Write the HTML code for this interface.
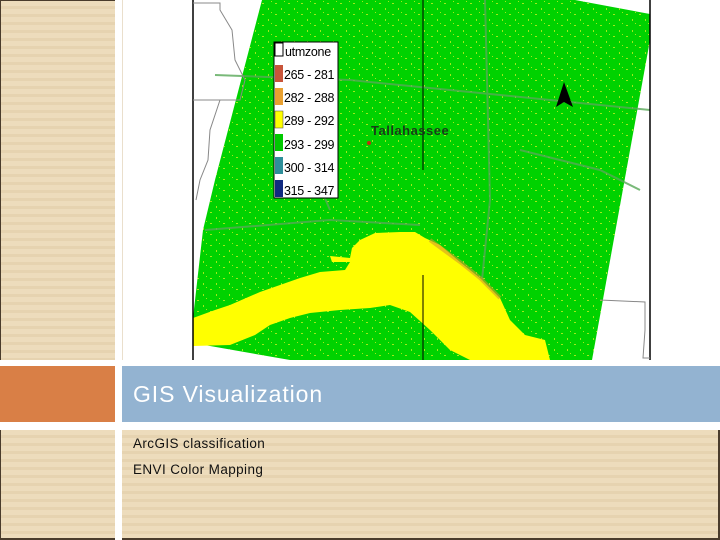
<!DOCTYPE html>
<html><head><meta charset="utf-8"><style>
body{margin:0;width:720px;height:540px;position:relative;overflow:hidden;background:#fff;font-family:"Liberation Sans",sans-serif}
.str{position:absolute;background:repeating-linear-gradient(180deg,#eddcbc 0,#eddcbc 5px,#e6d3b0 5px,#e6d3b0 8px)}
</style></head><body>
<div class="str" style="left:0;top:0;width:115px;height:360px;border-top:1px solid #4a3c2c;border-left:1px solid #4a3c2c;box-sizing:border-box"></div>
<div style="position:absolute;left:122px;top:0;width:1px;height:360px;background:#eadfcc"></div>
<div style="position:absolute;left:0;top:366px;width:115px;height:56px;background:#d97f46"></div>
<div style="position:absolute;left:122px;top:366px;width:598px;height:56px;background:#93b3d1"></div>
<div style="position:absolute;left:133px;top:381px;color:#fff;font-size:23px;letter-spacing:0.9px">GIS Visualization</div>
<div class="str" style="left:0;top:430px;width:115px;height:110px;border-left:1px solid #4a3c2c;border-bottom:2px solid #4a3c2c;box-sizing:border-box"></div>
<div class="str" style="left:122px;top:430px;width:598px;height:110px;border-right:2px solid #4a3c2c;border-bottom:2px solid #4a3c2c;box-sizing:border-box"></div>
<div style="position:absolute;left:133px;top:431px;font-size:13.5px;color:#111;line-height:26px;letter-spacing:0.4px">ArcGIS classification<br>ENVI Color Mapping</div>
<svg style="position:absolute;left:0;top:0" width="720" height="362">
<defs>
<pattern id="sp" width="13" height="11" patternUnits="userSpaceOnUse">
<rect x="2" y="3" width="2" height="1" fill="#c8f020"/><rect x="8" y="8" width="1" height="2" fill="#c8f020"/><rect x="11" y="1" width="1" height="1" fill="#c8f020"/>
</pattern>
<clipPath id="cl"><polygon points="262,0 575,0 650,14 650,40 592,360 290,360 193,343 193,318 203,230 215,180"/></clipPath>
</defs>
<polygon points="262,0 575,0 650,14 650,40 592,360 290,360 193,343 193,318 203,230 215,180" fill="#00d200"/>
<g clip-path="url(#cl)">
<rect x="190" y="0" width="470" height="360" fill="url(#sp)" opacity="0.8"/>
</g>
<g stroke="#58a858" stroke-width="2" fill="none" opacity="0.8">
<path d="M215,75 L350,80 L500,95 L650,110"/><path d="M205,230 L330,220 L420,225"/><path d="M485,0 L490,200 L480,300"/><path d="M300,140 L330,210"/><path d="M520,150 L600,170 L640,190"/>
</g>
<polygon points="193,318 215,310 230,305 260,292 300,278 320,272 345,270 350,262 332,262 330,256 350,258 352,248 360,240 375,233 400,232 415,232 425,238 440,245 460,262 480,278 500,298 510,320 525,335 545,340 550,360 470,360 450,350 430,330 410,312 390,305 370,308 340,310 310,313 290,318 270,325 255,335 230,345 193,346" fill="#ffff00"/>
<path d="M430,240 L460,262 L480,278 L500,298" stroke="#d49a2a" stroke-width="4" fill="none" opacity="0.6"/>
<path d="M193,0 V360 M650,0 V360" stroke="#000" stroke-width="1.5"/>
<path d="M423,0 V170 M423,275 V360" stroke="#000" stroke-width="1"/>
<path d="M193,3 H220 V10 L232,30 L235,60 L245,80 L240,100 L215,100 L193,100 M220,100 L210,130 L208,160 L200,180 L196,200" stroke="#888" fill="none"/>
<path d="M600,300 L645,302 L645,330 L643,358 L650,358" stroke="#888" fill="none"/>
<rect x="274" y="42" width="64" height="156" fill="#fff" stroke="#000"/>
<rect x="275" y="43" width="8" height="13" fill="#fff" stroke="#000"/>
<rect x="275" y="65" width="8" height="17" fill="#c8553a"/>
<rect x="275" y="88" width="8" height="17" fill="#e8a030"/>
<rect x="275" y="111" width="8" height="17" fill="#ffff00" stroke="#444" stroke-width="0.5"/>
<rect x="275" y="134" width="8" height="17" fill="#00c800"/>
<rect x="275" y="157" width="8" height="17" fill="#2e8f9a"/>
<rect x="275" y="180" width="8" height="17" fill="#102a80"/>
<g font-family="Liberation Sans,sans-serif" font-size="12.5" fill="#000" letter-spacing="-0.3">
<text x="285" y="56">utmzone</text><text x="284" y="79">265 - 281</text><text x="284" y="102">282 - 288</text><text x="284" y="125">289 - 292</text><text x="284" y="149">293 - 299</text><text x="284" y="172">300 - 314</text><text x="284" y="195">315 - 347</text>
</g>
<text x="371" y="135" font-family="Liberation Sans,sans-serif" font-size="13" font-weight="bold" fill="#1a3a1a" letter-spacing="0.5">Tallahassee</text>
<circle cx="369" cy="143" r="2" fill="#c03010"/>
<polygon points="564,82 556,107 564,102 573,107" fill="#000"/>
</svg>
</body></html>
